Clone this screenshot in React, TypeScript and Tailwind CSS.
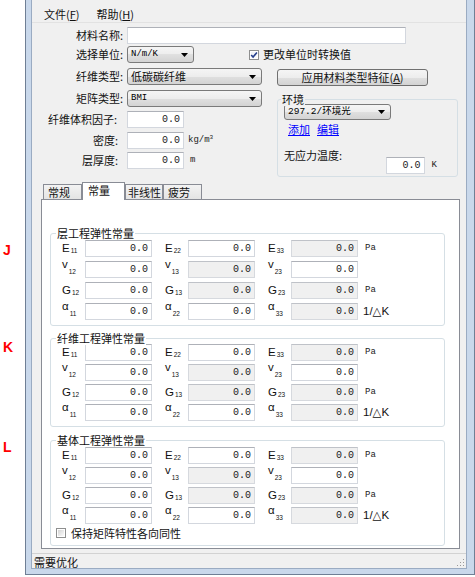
import React from "react";

const CN = "font-['Noto_Sans_CJK_SC','Noto_Sans',sans-serif]";
const MONO = "font-['Liberation_Mono','Noto_Sans_CJK_SC',monospace]";
const ARIAL = "font-['Liberation_Sans','DejaVu_Sans',sans-serif]";

const comboBg = "bg-[linear-gradient(#f5f5f5,#ededed_50%,#e0e0e0_50%,#d3d3d3)]";
const tabBg = "bg-[linear-gradient(#f3f3f3,#e4e4e4)]";

function Arrow() {
  return (
    <svg width="7" height="4" viewBox="0 0 7 4" className="shrink-0">
      <path d="M0 0H7L3.5 4Z" fill="#000" />
    </svg>
  );
}

function Combo({ w, h = "h-[17px]", textCls, children }: { w: string; h?: string; textCls: string; children: React.ReactNode }) {
  return (
    <div className={`${w} ${h} flex items-center rounded-[3px] border border-[#7a7a7a] ${comboBg} pl-[3px] pr-[5px]`}>
      <span className={`flex-1 truncate ${textCls}`}>{children}</span>
      <Arrow />
    </div>
  );
}

function TextBox({ w, value = "0.0", disabled = false, extra = "" }: { w: string; value?: string; disabled?: boolean; extra?: string }) {
  return (
    <div
      className={`${w} h-[17px] shrink-0 flex items-center justify-end pr-[3px] border ${
        disabled ? "bg-[#f0f0f0] border-[#d6d9de] border-t-[#bfc2c8]" : "bg-white border-[#d3d7de] border-t-[#aeb1b8]"
      } ${MONO} text-[10px] leading-[15px] text-[#1a1a1a] ${extra}`}
    >
      {value}
    </div>
  );
}

function CheckBox({ checked }: { checked?: boolean }) {
  return (
    <svg width="10" height="10" viewBox="0 0 10 10" className="shrink-0">
      <defs>
        <linearGradient id={checked ? "cbA" : "cbB"} x1="0" y1="0" x2="1" y2="1">
          <stop offset="0" stopColor={checked ? "#eef2f8" : "#d4d4d4"} />
          <stop offset="1" stopColor="#fbfbfb" />
        </linearGradient>
      </defs>
      <rect x="0.5" y="0.5" width="9" height="9" fill="#fff" stroke="#8e8f8f" />
      <rect x="2" y="2" width="6" height="6" fill={`url(#${checked ? "cbA" : "cbB"})`} />
      {checked && <path d="M2.2 5 L4.1 7.1 L7.9 2.4" fill="none" stroke="#263f8c" strokeWidth="1.6" />}
    </svg>
  );
}

function Label({ pr, children }: { pr: string; children: React.ReactNode }) {
  return <div className={`w-[95px] shrink-0 text-right ${pr} text-[11px] leading-[17px] text-[#111]`}>{children}</div>;
}

type CellDef = { s: string; sub: string; raised?: boolean; dis?: boolean };
type RowDef = { cells: CellDef[]; unit: string | null };

const rows: RowDef[] = [
  { cells: [{ s: "E", sub: "11" }, { s: "E", sub: "22" }, { s: "E", sub: "33", dis: true }], unit: "Pa" },
  { cells: [{ s: "v", sub: "12", raised: true }, { s: "v", sub: "13", raised: true, dis: true }, { s: "v", sub: "23", raised: true }], unit: null },
  { cells: [{ s: "G", sub: "12" }, { s: "G", sub: "13", dis: true }, { s: "G", sub: "23", dis: true }], unit: "Pa" },
  { cells: [{ s: "α", sub: "11", raised: true }, { s: "α", sub: "22", raised: true }, { s: "α", sub: "33", raised: true, dis: true }], unit: "1/△K" },
];

function Sym({ c }: { c: CellDef }) {
  return (
    <div className={`w-[23px] h-[17px] shrink-0 leading-[17px] whitespace-nowrap ${ARIAL} text-[11.5px] text-[#111]`}>
      <span className={c.raised ? "align-[5px] leading-[6px]" : "leading-none"}>{c.s}</span>
      <span className="ml-[1px] text-[6.5px] leading-none align-[-1px]">{c.sub}</span>
    </div>
  );
}

function ConstRow({ row }: { row: RowDef }) {
  return (
    <div className="flex h-[17px] items-center">
      {row.cells.map((c, i) => (
        <div key={i} className={`flex items-center ${i === 0 ? "ml-[11px]" : "ml-[13px]"}`}>
          <Sym c={c} />
          <TextBox w="w-[67px]" disabled={c.dis} />
        </div>
      ))}
      {row.unit === "Pa" && <span className={`ml-[7px] ${MONO} text-[9px] text-[#222]`}>Pa</span>}
      {row.unit === "1/△K" && <span className={`ml-[5px] ${ARIAL} text-[11.5px] text-[#111]`}>1/△K</span>}
    </div>
  );
}

function Group({ title, className, children }: { title: string; className: string; children: React.ReactNode }) {
  return (
    <div className={`relative border border-[#d5dfe5] rounded-[3px] flex flex-col ${className}`}>
      <span className="absolute left-[5px] -top-[7px] px-[1px] bg-white text-[11px] leading-[13px] text-[#111]">{title}</span>
      {children}
    </div>
  );
}

function Tab({ label, w, pl, active }: { label: string; w: string; pl: string; active?: boolean }) {
  return (
    <div
      className={`${w} ${pl} shrink-0 border border-b-0 border-[#898c95] text-[11px] leading-[13px] text-[#111] ${
        active ? "h-[18px] -mb-[1px] bg-white pt-[1px] relative z-10" : `h-[15px] ${tabBg} pt-[1px]`
      }`}
    >
      {label}
    </div>
  );
}

export default function App() {
  return (
    <div className={`w-[475px] h-[577px] bg-white flex overflow-hidden ${CN}`}>
      {/* annotation letters */}
      <div className={`w-[25px] shrink-0 flex flex-col pl-[3px] ${ARIAL} font-bold text-[14px] leading-[14px] text-[#ff0000]`}>
        <span className="mt-[243px] h-[14px]">J</span>
        <span className="mt-[83px] h-[14px]">K</span>
        <span className="mt-[86px] h-[14px]">L</span>
      </div>

      {/* window frame */}
      <div className="w-[450px] h-[575px] shrink-0 bg-[#c9d8eb] border-x border-b border-[#6f7f95] pl-[5px] pr-[7px] pb-[5px]">
        <div className="border-x border-b border-[#9aabc2]">
          <div className="w-[434px] h-[568px] bg-[#f0f0f0] flex flex-col">
            {/* menu */}
            <div className="h-[23px] shrink-0 flex items-start pt-[8px] border-b border-[#e2e2e2] text-[11px] leading-[12px] text-[#111]">
              <span className="ml-[12px]">文件(<u>F</u>)</span>
              <span className="ml-[17px]">帮助(<u>H</u>)</span>
            </div>

            {/* 材料名称 */}
            <div className="mt-[4px] h-[17px] flex items-center">
              <Label pr="pr-[4px]">材料名称:</Label>
              <TextBox w="w-[279px]" value="" />
            </div>

            {/* 选择单位 */}
            <div className="mt-[2px] h-[17px] flex items-center">
              <Label pr="pr-[4px]">选择单位:</Label>
              <Combo w="w-[67px]" textCls={`${MONO} text-[9px] leading-[15px]`}>N/m/K</Combo>
              <div className="ml-[55px]">
                <CheckBox checked />
              </div>
              <span className="ml-[4px] text-[11px] leading-[17px] text-[#111]">更改单位时转换值</span>
            </div>

            {/* two columns */}
            <div className="mt-[5px] h-[114px] shrink-0 flex">
              <div className="w-[245px] shrink-0 flex flex-col">
                <div className="h-[17px] flex items-center">
                  <Label pr="pr-[4px]">纤维类型:</Label>
                  <Combo w="w-[135px]" textCls="text-[11px] leading-[15px] text-[#111]">低碳碳纤维</Combo>
                </div>
                <div className="mt-[5px] h-[17px] flex items-center">
                  <Label pr="pr-[4px]">矩阵类型:</Label>
                  <Combo w="w-[135px]" textCls={`${MONO} text-[9px] leading-[15px]`}>BMI</Combo>
                </div>
                <div className="mt-[4px] h-[17px] flex items-center">
                  <Label pr="pr-[10px]">纤维体积因子:</Label>
                  <TextBox w="w-[57px]" />
                </div>
                <div className="mt-[4px] h-[17px] flex items-center">
                  <Label pr="pr-[9px]">密度:</Label>
                  <TextBox w="w-[57px]" />
                  <span className={`ml-[4px] ${MONO} text-[9px] text-[#222]`}>
                    kg/m<sup className="text-[6px]">3</sup>
                  </span>
                </div>
                <div className="mt-[3px] h-[17px] flex items-center">
                  <Label pr="pr-[9px]">层厚度:</Label>
                  <TextBox w="w-[57px]" />
                  <span className={`ml-[6px] ${MONO} text-[9px] text-[#222]`}>m</span>
                </div>
              </div>

              <div className="flex flex-col">
                <div className={`mt-[1px] w-[151px] h-[17px] rounded-[3px] border border-[#707070] ${comboBg} flex items-center justify-center text-[11px] leading-[15px] text-[#111]`}>
                  应用材料类型特征(<u>A</u>)
                </div>
                <div className="relative mt-[13px] w-[181px] border border-[#d5dfe5] rounded-[3px] pt-[4px] pl-[6px] pb-[2px] flex flex-col">
                  <span className="absolute left-[3px] -top-[7px] px-[1px] bg-[#f0f0f0] text-[11px] leading-[13px] text-[#111]">环境</span>
                  <Combo w="w-[107px]" h="h-[16px]" textCls={`${MONO} text-[9.5px] leading-[14px]`}>297.2/环境光</Combo>
                  <div className="mt-[3px] h-[12px] flex text-[11px] leading-[12px] text-[#0000ff]">
                    <span className="ml-[4px] underline">添加</span>
                    <span className="ml-[7px] underline">编辑</span>
                  </div>
                  <div className="mt-[14px] flex pr-[20px]">
                    <span className="text-[11px] leading-[12px] text-[#111]">无应力温度:</span>
                    <div className="ml-auto mt-[8px] flex items-center">
                      <TextBox w="w-[39px]" />
                      <span className={`ml-[7px] ${MONO} text-[9px] text-[#222]`}>K</span>
                    </div>
                  </div>
                </div>
              </div>
            </div>

            {/* tabs */}
            <div className="ml-[11px] h-[17px] shrink-0 flex items-end relative z-10">
              <Tab label="常规" w="w-[39px]" pl="pl-[4px]" />
              <Tab label="常量" w="w-[43px]" pl="pl-[5px]" active />
              <Tab label="非线性" w="w-[38px]" pl="pl-[2px]" />
              <Tab label="疲劳" w="w-[39px]" pl="pl-[4px]" />
            </div>

            {/* tab panel */}
            <div className="ml-[9px] w-[419px] h-[350px] shrink-0 border border-[#898c95] bg-white pt-[33px] pl-[8px] flex flex-col">
              <Group title="层工程弹性常量" className="w-[395px] h-[93px] pt-[6px] gap-[4px]">
                {rows.map((r, i) => (
                  <ConstRow key={i} row={r} />
                ))}
              </Group>
              <Group title="纤维工程弹性常量" className="mt-[12px] w-[395px] h-[89px] pt-[5px] gap-[3px]">
                {rows.map((r, i) => (
                  <ConstRow key={i} row={r} />
                ))}
              </Group>
              <Group title="基体工程弹性常量" className="mt-[13px] w-[395px] h-[106px] pt-[6px] gap-[3px]">
                {rows.map((r, i) => (
                  <ConstRow key={i} row={r} />
                ))}
                <div className="h-[12px] flex items-center pl-[5px]">
                  <CheckBox />
                  <span className="ml-[5px] text-[11px] leading-[12px] text-[#111]">保持矩阵特性各向同性</span>
                </div>
              </Group>
            </div>

            {/* status bar */}
            <div className="mt-[4px] h-[15px] shrink-0 border-t border-[#d2d2d2] flex">
              <span className="pl-[2px] pt-[2px] text-[11px] leading-[12px] text-[#111]">需要优化</span>
              <svg width="8" height="8" viewBox="0 0 8 8" className="ml-auto mt-auto mb-[1px] mr-[1px]">
                <rect x="6" y="0" width="1" height="1" fill="#9a9a9a" />
                <rect x="3" y="3" width="1" height="1" fill="#9a9a9a" />
                <rect x="6" y="3" width="1" height="1" fill="#9a9a9a" />
                <rect x="0" y="6" width="1" height="1" fill="#9a9a9a" />
                <rect x="3" y="6" width="1" height="1" fill="#9a9a9a" />
                <rect x="6" y="6" width="1" height="1" fill="#9a9a9a" />
              </svg>
            </div>
          </div>
        </div>
      </div>
    </div>
  );
}
